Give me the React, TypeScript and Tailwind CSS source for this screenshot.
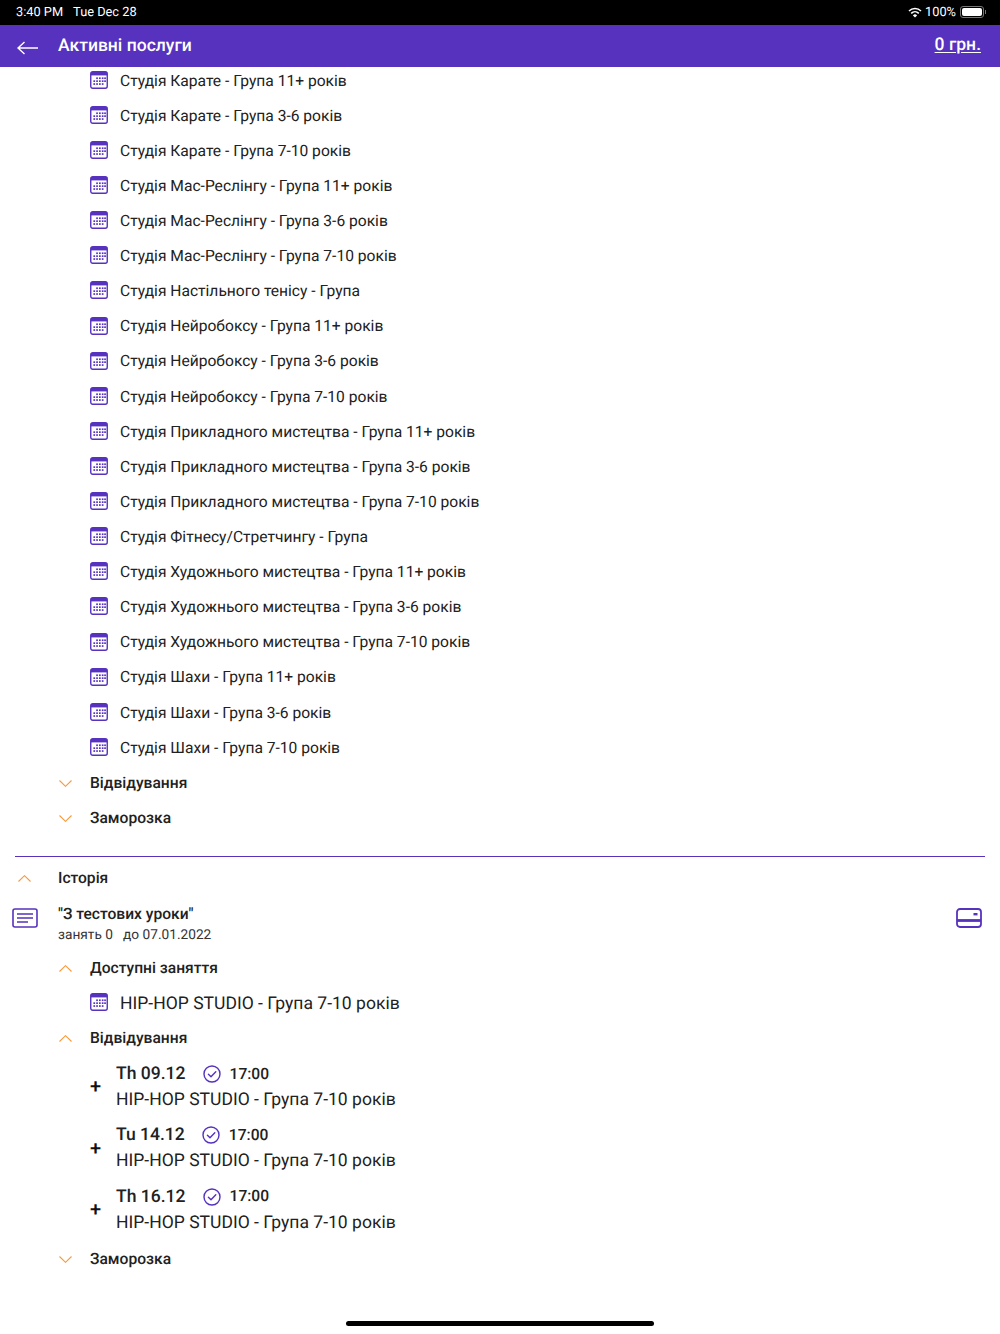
const groups = [
  'Студія Карате - Група 11+ років',
  'Студія Карате - Група 3-6 років',
  'Студія Карате - Група 7-10 років',
  'Студія Мас-Реслінгу - Група 11+ років',
  'Студія Мас-Реслінгу - Група 3-6 років',
  'Студія Мас-Реслінгу - Група 7-10 років',
  'Студія Настільного тенісу - Група',
  'Студія Нейробоксу - Група 11+ років',
  'Студія Нейробоксу - Група 3-6 років',
  'Студія Нейробоксу - Група 7-10 років',
  'Студія Прикладного мистецтва - Група 11+ років',
  'Студія Прикладного мистецтва - Група 3-6 років',
  'Студія Прикладного мистецтва - Група 7-10 років',
  'Студія Фітнесу/Стретчингу - Група',
  'Студія Художнього мистецтва - Група 11+ років',
  'Студія Художнього мистецтва - Група 3-6 років',
  'Студія Художнього мистецтва - Група 7-10 років',
  'Студія Шахи - Група 11+ років',
  'Студія Шахи - Група 3-6 років',
  'Студія Шахи - Група 7-10 років',
];

const visits = [
  { day: 'Th 09.12', time: '17:00' },
  { day: 'Tu 14.12', time: '17:00' },
  { day: 'Th 16.12', time: '17:00' },
];

function CalendarIcon() {
  return (
    <svg width="18" height="18" viewBox="0 0 18 18" className="mb-[3px] shrink-0">
      <rect x="0.75" y="0.75" width="16.5" height="16.5" rx="2" fill="#fff" stroke="#5632be" strokeWidth="1.4" />
      <rect x="1" y="1" width="16" height="3.4" fill="#5632be" />
      {[6.4, 9.3, 12.2].map((y) =>
        [3.6, 6.4, 9.2, 12, 14.4].map((x) =>
          (y === 6.4 && x < 6) || (y === 12.2 && x > 14) ? null : (
            <rect key={`${x}-${y}`} x={x - 0.2} y={y} width="1.7" height="1.7" fill="#5632be" />
          ),
        ),
      )}
    </svg>
  );
}

function Chevron({ open }: { open?: boolean }) {
  return (
    <svg width="13" height="7" viewBox="0 0 13 7" fill="none" stroke="#f7993c" strokeWidth="1.1" className="shrink-0">
      <path d={open ? 'M0.5 6.5L6.5 0.7l6 5.8' : 'M0.5 0.5l6 5.8 6-5.8'} />
    </svg>
  );
}

function GroupRow({ title }: { title: string }) {
  return (
    <div className="flex h-[35.12px] items-center pl-[90px]">
      <CalendarIcon />
      <span className="ml-[12px] text-[15.6px] text-[#212121]">{title}</span>
    </div>
  );
}

function SubHeader({ title, open }: { title: string; open?: boolean }) {
  return (
    <div className="flex h-[35.12px] items-center pl-[59px]">
      <Chevron open={open} />
      <span className="ml-[18px] text-[15.6px] font-medium text-[#212121]">{title}</span>
    </div>
  );
}

function VisitRow({ day, time }: { day: string; time: string }) {
  return (
    <div className="flex h-[61.4px] items-center pl-[90px]">
      <span className="mb-[2px] w-[26px] text-[20px] font-medium leading-none text-[#111]">+</span>
      <div>
        <div className="flex h-[26px] items-center">
          <span className="text-[17.55px] font-medium text-[#212121]">{day}</span>
          <svg width="18" height="18" viewBox="0 0 18 18" fill="none" stroke="#5632be" strokeWidth="1.4" className="mb-[1px] ml-[17px]">
            <circle cx="9" cy="9" r="8" />
            <path d="M5.4 9.2l2.6 2.6 4.8-5" strokeLinecap="round" strokeLinejoin="round" />
          </svg>
          <span className="ml-[9px] text-[15.6px] font-medium text-[#212121]">{time}</span>
        </div>
        <div className="flex h-[26px] items-center text-[17.55px] text-[#212121]">HIP-HOP STUDIO - Група 7-10 років</div>
      </div>
    </div>
  );
}

export default function App() {
  return (
    <div className="flex h-[1334px] flex-col overflow-hidden bg-white font-['Roboto',sans-serif] [text-rendering:geometricPrecision]">
      <div className="relative z-10">
        <div className="flex h-[25px] items-center justify-between bg-black pl-[16px] pr-[14px] text-[12.8px] text-white">
          <div className="flex gap-[10px]">
            <span>3:40 PM</span>
            <span>Tue Dec 28</span>
          </div>
          <div className="flex items-center gap-[3px]">
            <svg width="14" height="11" viewBox="0 0 14 11" fill="none" stroke="#fff" strokeWidth="1.6" className="mb-[1px]">
              <path d="M1 4a8.6 8.6 0 0 1 12 0" />
              <path d="M3.2 6.3a5.5 5.5 0 0 1 7.6 0" />
              <path d="M7 10.6L4.9 8.4a3 3 0 0 1 4.2 0z" fill="#fff" stroke="none" />
            </svg>
            <span>100%</span>
            <div className="mb-[1px] ml-[1px] flex items-center">
              <div className="h-[12px] w-[24px] rounded-[3px] border border-[#777] p-[1px]">
                <div className="h-full w-full rounded-[2px] bg-white" />
              </div>
              <div className="ml-[1px] h-[4px] w-[1px] bg-[#777]" />
            </div>
          </div>
        </div>
        <div className="flex h-[42px] items-center justify-between bg-[#5632be] pl-[17px] pr-[19px] text-white">
          <div className="flex items-center">
            <svg width="21" height="14" viewBox="0 0 21 14" fill="none" stroke="#fff" strokeWidth="1.4" className="mt-[3px]">
              <path d="M21 7H1M7.5 1L1 7l6.5 6" />
            </svg>
            <span className="ml-[20px] text-[17.55px] font-medium">Активні послуги</span>
          </div>
          <span className="mb-[2px] text-[17.55px] font-medium underline underline-offset-2">0 грн.</span>
        </div>
      </div>

      <div className="mt-[-3.3px] flex-1">
        {groups.map((title) => (
          <GroupRow key={title} title={title} />
        ))}
        <SubHeader title="Відвідування" />
        <SubHeader title="Заморозка" />

        <div className="mx-[15px] mt-[19.6px] border-t border-[#5632be]" />

        <div className="mt-[4px] flex h-[35.12px] items-center pl-[18px]">
          <Chevron open />
          <span className="ml-[27px] text-[15.6px] font-medium text-[#212121]">Історія</span>
        </div>

        <div className="mt-[5px] flex h-[46px] items-center justify-between pl-[12px] pr-[18px]">
          <div className="flex items-center">
            <svg width="26" height="20" viewBox="0 0 26 20" fill="none" stroke="#5632be" className="mb-[11px]">
              <rect x="1" y="1" width="24" height="18" rx="2" strokeWidth="1.6" />
              <path d="M5 6h16M5 10h16M5 14h11" strokeWidth="1.6" />
            </svg>
            <div className="ml-[20px]">
              <div className="text-[15.6px] font-medium leading-[22px] text-[#212121]">"З тестових уроки"</div>
              <div className="text-[13.7px] leading-[20px] text-[#333]">занять 0&nbsp;&nbsp; до 07.01.2022</div>
            </div>
          </div>
          <svg width="26" height="20" viewBox="0 0 26 20" fill="none" stroke="#5632be" className="mb-[11px]">
            <rect x="1" y="1" width="24" height="18" rx="3" strokeWidth="1.8" />
            <path d="M1 12.5h24" strokeWidth="2.8" />
            <rect x="17.5" y="5" width="4" height="2.4" fill="#5632be" stroke="none" />
          </svg>
        </div>

        <div className="mt-[4.4px]">
          <SubHeader title="Доступні заняття" open />
          <div className="flex h-[35.12px] items-center pl-[90px]">
            <CalendarIcon />
            <span className="ml-[12px] text-[17.55px] text-[#212121]">HIP-HOP STUDIO - Група 7-10 років</span>
          </div>
          <SubHeader title="Відвідування" open />
          {visits.map((v) => (
            <VisitRow key={v.day} day={v.day} time={v.time} />
          ))}
          <div className="mt-[1px]">
            <SubHeader title="Заморозка" />
          </div>
        </div>
      </div>

      <div className="flex h-[13px] justify-center">
        <div className="h-[5px] w-[308px] rounded-full bg-black" />
      </div>
    </div>
  );
}
